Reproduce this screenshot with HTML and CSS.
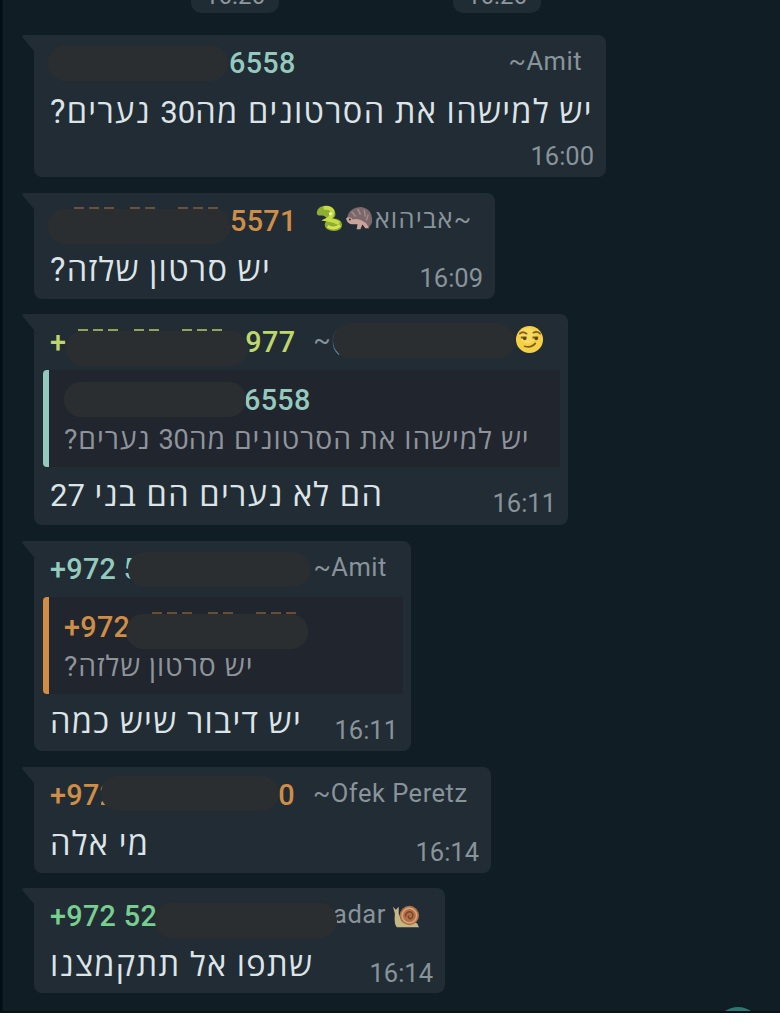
FILE: index.html
```html
<!DOCTYPE html>
<html lang="he">
<head>
<meta charset="utf-8">
<title>Chat</title>
<link rel="stylesheet" href="styles.css">
</head>
<body>
<main class="chat">
  <div class="chips"><span class="chip">16:26</span><span class="chip">16:26</span></div>

  <article class="bubble b1">
    <svg class="tail" viewBox="0 0 16 20"><path d="M16 0H2Q-1 0 1 3L12 16Q14 17 16 20Z"/></svg>
    <header class="head mint"><i class="pill first"></i><b class="phone w4">6558</b><span class="name push">~Amit</span></header>
    <div class="body"><p class="msg" dir="rtl">יש למישהו את הסרטונים מה<span class="num">30</span> נערים?</p></div>
    <time class="time below">16:00</time>
  </article>

  <article class="bubble b2">
    <svg class="tail" viewBox="0 0 16 20"><path d="M16 0H2Q-1 0 1 3L12 16Q14 17 16 20Z"/></svg>
    <header class="head orange"><i class="pill first low tips"></i><b class="phone w4">5571</b>
      <span class="name emoji-name">
        <svg class="emoji snake" viewBox="0 0 30 30"><path d="M2 8Q3 2 11 2Q20 2 21 9Q22 13 18 15Q27 15 28 21Q28 28 20 28Q10 28 10 21Q11 18 13 16Q10 11 6 12Q1 12 2 8Z" fill="#8fac35"/><path d="M9 4Q18 3 18 9Q17 14 13 16Q20 17 25 20" fill="none" stroke="#c5dc45" stroke-width="4"/><path d="M13 23Q20 27 26 22" fill="none" stroke="#d4e34f" stroke-width="3"/><circle cx="16" cy="10" r="1.6" fill="#f1f6a5"/></svg>
        <svg class="emoji" viewBox="0 0 30 30"><path d="M2 15Q4 3 17 3Q29 5 28 19Q26 25 22 24Q14 18 7 21Q1 20 2 15Z" fill="#7c686a"/><path d="M7 8l4 5M13 5l3 6M20 6l1 7M24 11l-2 6" stroke="#a18c8d" stroke-width="1.5"/><path d="M1 15Q5 12 8 16Q14 14 22 20L25 25H21L18 21L16 26H12L13 21L8 21Q3 21 1 15Z" fill="#caa49b"/><circle cx="5" cy="16" r="1" fill="#2d2525"/></svg>
        <span class="heb" dir="rtl">~אביהוא</span>
      </span></header>
    <div class="body"><p class="msg" dir="rtl">יש סרטון שלזה?</p><time class="time">16:09</time></div>
  </article>

  <article class="bubble b3">
    <svg class="tail" viewBox="0 0 16 20"><path d="M16 0H2Q-1 0 1 3L12 16Q14 17 16 20Z"/></svg>
    <header class="head lime"><b class="phone">+</b><i class="pill low tips"></i><b class="phone">977</b><span class="name sp">~(</span><i class="pill name-pill"></i>
      <svg class="emoji smirk" viewBox="0 0 30 30"><circle cx="15" cy="15" r="14" fill="#f5cf46"/><circle cx="13" cy="11" r="8" fill="#fae36e" opacity=".6"/><path d="M5 9Q8 6 12 9M19 8Q23 6 26 9M10 22Q17 24 21 19" fill="none" stroke="#80601f" stroke-width="1.8" stroke-linecap="round"/><path d="M6 13H12M18 13H24" stroke="#80601f" stroke-width="2"/><circle cx="10" cy="14" r="1.8" fill="#5c4320"/><circle cx="22" cy="14" r="1.8" fill="#5c4320"/></svg>
    </header>
    <section class="quote mint"><div class="qhead"><i class="pill"></i><b class="phone">6558</b></div><p class="qmsg" dir="rtl">יש למישהו את הסרטונים מה<span class="num">30</span> נערים?</p></section>
    <div class="body"><p class="msg" dir="rtl">הם לא נערים הם בני <span class="num">27</span></p><time class="time">16:11</time></div>
  </article>

  <article class="bubble b4">
    <svg class="tail" viewBox="0 0 16 20"><path d="M16 0H2Q-1 0 1 3L12 16Q14 17 16 20Z"/></svg>
    <header class="head mint"><b class="phone">+972 5</b><i class="pill"></i><span class="name">~Amit</span></header>
    <section class="quote orange"><div class="qhead"><b class="phone">+972</b><i class="pill tips"></i></div><p class="qmsg" dir="rtl">יש סרטון שלזה?</p></section>
    <div class="body"><p class="msg" dir="rtl">יש דיבור שיש כמה</p><time class="time">16:11</time></div>
  </article>

  <article class="bubble b5">
    <svg class="tail" viewBox="0 0 16 20"><path d="M16 0H2Q-1 0 1 3L12 16Q14 17 16 20Z"/></svg>
    <header class="head orange"><b class="phone">+972</b><i class="pill"></i><b class="phone zero">0</b><span class="name sp">~Ofek Peretz</span></header>
    <div class="body"><p class="msg" dir="rtl">מי אלה</p><time class="time">16:14</time></div>
  </article>

  <article class="bubble b6">
    <svg class="tail" viewBox="0 0 16 20"><path d="M16 0H2Q-1 0 1 3L12 16Q14 17 16 20Z"/></svg>
    <header class="head green"><b class="phone">+972 52</b><i class="pill low"></i><span class="name">adar</span>
      <svg class="emoji snail" viewBox="0 0 30 30"><path d="M2 5L5 8L8 5V12L11 20L27 22L29 26H6Q3 24 4 12Z" fill="#c3b786"/><circle cx="19" cy="14" r="10" fill="#ae7149"/><circle cx="19" cy="14" r="7.5" fill="none" stroke="#dda47a" stroke-width="1.5"/><path d="M15 15Q15 10 20 10Q25 13 21 17Q18 18 18 14" fill="none" stroke="#7b472c" stroke-width="1.6"/></svg>
    </header>
    <div class="body"><p class="msg" dir="rtl">שתפו אל תתקמצנו</p><time class="time">16:14</time></div>
  </article>
  <i class="fab"></i>
</main>
</body>
</html>
```
FILE: styles.css
```css
* { box-sizing: border-box; }
body { margin: 0; background: #fff; font-family: Roboto, "Open Sans", sans-serif; }
p { margin: 0; }
i { font-style: normal; }
.chat { position: relative; height: 1013px; overflow: hidden; padding-left: 34px; background: linear-gradient(90deg, #030d12 0 2px, #101d24 3px); border-bottom: 2px solid #0a1216; display: flex; flex-direction: column; align-items: flex-start; }
.chips { display: flex; gap: 174px; height: 35px; padding-left: 157px; align-items: flex-start; }
.chip { width: 88px; height: 13px; border-radius: 0 0 10px 10px; background: #202c33; color: #8e989e; display: flex; align-items: flex-end; justify-content: center; font-size: 24px; line-height: 18px; padding-bottom: 8px; }
.bubble { position: relative; flex: none; display: flex; flex-direction: column; background: #212c34; border-radius: 0 8px 8px 8px; margin-bottom: 15px; }
.tail { position: absolute; left: -12px; top: 0; width: 16px; height: 20px; fill: #212c34; }
.b1 { width: 572px; height: 142px; margin-bottom: 16px; }
.b2 { width: 461px; height: 106px; }
.b3 { width: 534px; height: 211px; margin-bottom: 16px; }
.b4 { width: 377px; height: 210px; margin-bottom: 16px; }
.b5 { width: 457px; height: 106px; }
.b6 { width: 411px; height: 105px; }
.head { height: 56px; padding-left: 16px; display: flex; align-items: center; flex: none; white-space: pre; }
.phone { font-weight: 500; font-size: 28.8px; line-height: 34px; letter-spacing: .3px; flex: none; }
.pill { position: relative; z-index: 1; flex: none; width: 182px; height: 35px; border-radius: 17px; background: #2b2e31; }
.name { color: #89939a; font-size: 25.5px; line-height: 30px; letter-spacing: .5px; padding-bottom: 5px; flex: none; }
.heb { letter-spacing: 1.2px; }
.mint { color: #94cabd; }
.orange { color: #cf8d45; }
.lime { color: #bfd76a; }
.green { color: #79cd91; }
.time { color: #89939a; font-size: 25.5px; line-height: 30px; margin-left: auto; margin-top: 15px; padding-right: 12px; }
.body { height: 46px; padding-left: 16px; margin-top: -2px; display: flex; align-items: center; flex: none; }
.msg { color: #dde4e8; font-size: 32.6px; line-height: 46px; letter-spacing: 1.3px; white-space: nowrap; }
.num { font-size: .955em; letter-spacing: 0; }
.quote { margin-left: 9px; margin-right: 8px; height: 97px; border-left: 6px solid; border-radius: 4px 0 0 4px; background: #20252e; padding: 12px 0 0 15px; flex: none; }
.qhead { height: 35px; display: flex; align-items: center; }
.qmsg { width: max-content; color: #8f949b; font-size: 28.3px; line-height: 46px; letter-spacing: .94px; white-space: nowrap; }
.quote + .body { margin-top: 5px; }
.emoji { width: 29px; height: 29px; flex: none; }
.first { margin-left: -2px; }
.b1 .first { width: 180px; margin-right: 1px; }
.low { margin-top: 12px; }
.b2 .low { margin-top: 10px; }
.tips::before { content: ""; position: absolute; left: 26px; top: -2px; width: 146px; height: 2px; color: inherit; opacity: .4; background: repeating-linear-gradient(90deg, currentColor 0 10px, transparent 0 15px) 0 0 / 42px 2px no-repeat, repeating-linear-gradient(90deg, currentColor 0 10px, transparent 0 15px) 56px 0 / 26px 2px no-repeat, repeating-linear-gradient(90deg, currentColor 0 10px, transparent 0 15px) 104px 0 / 42px 2px no-repeat; }
.push { margin-left: auto; margin-right: 24px; }
.below { margin-top: -1px; margin-left: auto; padding-right: 12px; padding-top: 7px; }
.emoji-name { display: flex; align-items: center; margin-left: 18px; gap: 1px; }
.sp { margin-left: 18px; }
.b3 .head .pill:nth-child(2) { margin-left: 0; margin-right: -3px; }
.b3 .head .tips::before { left: 12px; opacity: .7; }
.name-pill { margin-left: -7px; margin-bottom: 4px; }
.smirk { margin-bottom: 5px; }
.b3 .qhead .pill { margin-right: -2px; }
.b4 .head .pill { margin-left: -12px; margin-right: 3px; }
.b4 .qhead .pill { margin-left: -4px; margin-top: 9px; }
.b4 .time { padding-right: 13px; }
.b5 .head .pill { width: 178px; margin-left: -15px; margin-bottom: 4px; margin-right: -1px; }
.b6 .head .pill { margin-right: -4px; margin-left: -2px; margin-top: 9px; }
.snail { margin-left: 5px; }
.fab { position: absolute; left: 719px; top: 1007px; width: 38px; height: 30px; border-radius: 50%; background: #2e7770; }
```
